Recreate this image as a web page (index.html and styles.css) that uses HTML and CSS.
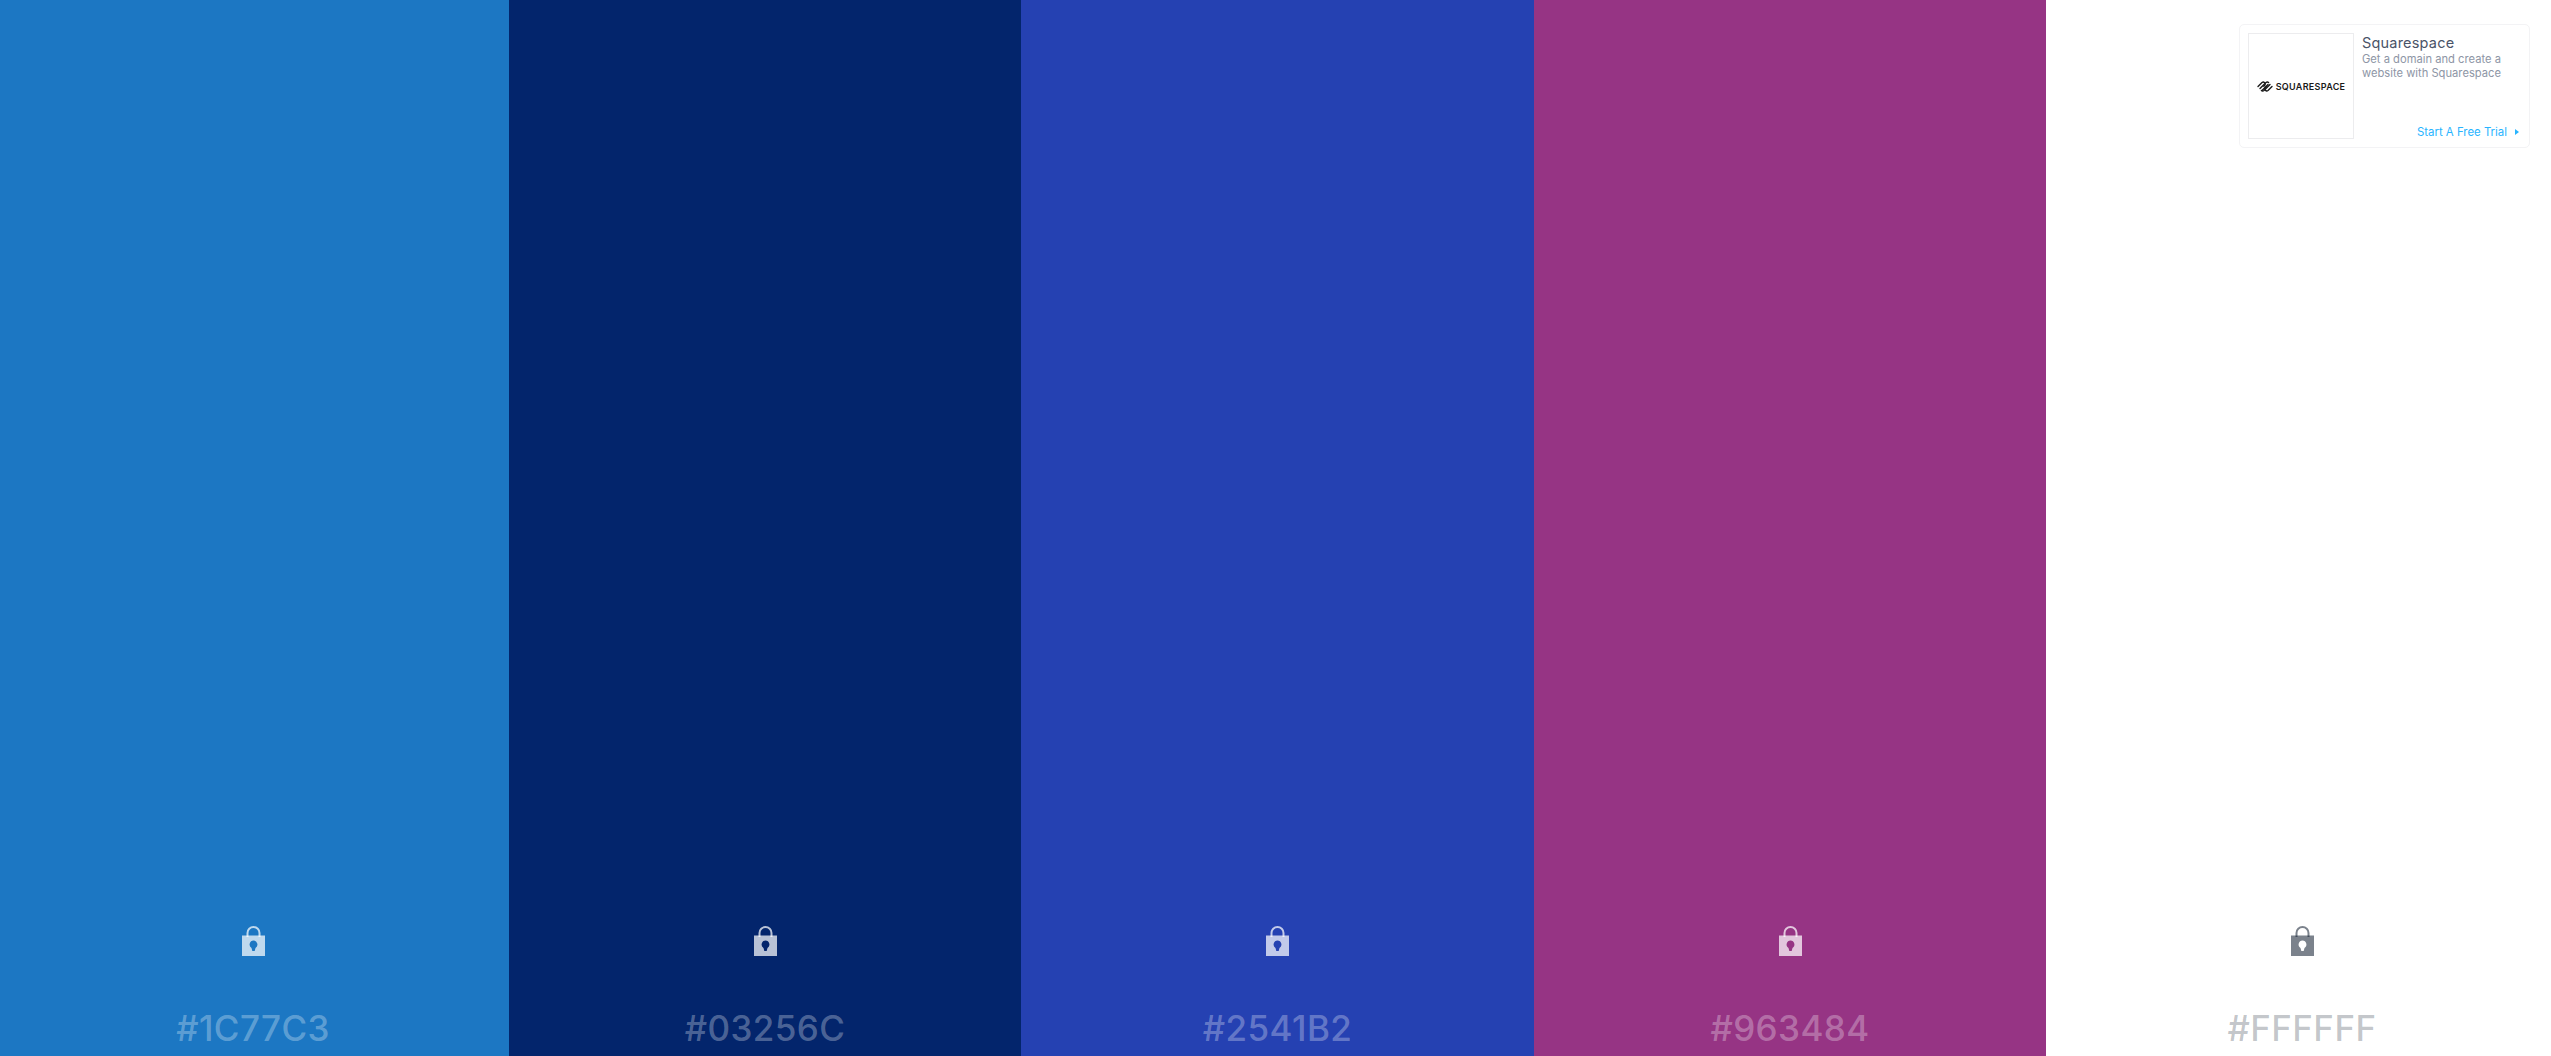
FILE: index.html
```html
<!DOCTYPE html>
<html lang="en">
<head>
<meta charset="utf-8">
<title>Color palette</title>
<link rel="stylesheet" href="styles.css">
</head>
<body>
<svg class="defs" width="0" height="0" aria-hidden="true">
  <symbol id="lock" viewBox="0 0 23 30">
    <path class="shackle" d="M5.5 11V7a6 6 0 0 1 12 0V11"/>
    <path class="lock-body" fill-rule="evenodd" d="M0 9.5h23V30H0zM11.5 14.5a4 4 0 0 0-2 7.4L10.3 25h2.4l.8-3.1a4 4 0 0 0-2-7.4z"/>
  </symbol>
</svg>
<main class="palette">
  <section class="swatch swatch-blue">
    <svg class="lock"><use href="#lock"/></svg>
    <div class="hex">#1C77C3</div>
  </section>
  <section class="swatch swatch-navy">
    <svg class="lock"><use href="#lock"/></svg>
    <div class="hex">#03256C</div>
  </section>
  <section class="swatch swatch-indigo">
    <svg class="lock"><use href="#lock"/></svg>
    <div class="hex">#2541B2</div>
  </section>
  <section class="swatch swatch-plum">
    <svg class="lock"><use href="#lock"/></svg>
    <div class="hex">#963484</div>
  </section>
  <section class="swatch swatch-white">
    <svg class="lock"><use href="#lock"/></svg>
    <div class="hex">#FFFFFF</div>
  </section>
</main>
<aside class="ad">
  <div class="ad-logo">
    <svg class="ad-mark" viewBox="0 0 16 13" aria-hidden="true">
      <g fill="none" stroke="#1a1a1a" stroke-width="1.35" stroke-linecap="round" stroke-linejoin="round">
        <path d="M1 6.5 5 2.5a2 2 0 0 1 2.8 2.8L6.8 6.3"/>
        <path d="M3 8.5 9 2.5a2 2 0 0 1 2.6 0"/>
        <path d="M5 10.5 11 4.5"/>
        <path d="M15 6.5 11 10.5a2 2 0 0 1-2.8-2.8L9.2 6.7"/>
        <path d="M13 4.5 7 10.5a2 2 0 0 1-2.6 0"/>
      </g>
    </svg>
    <span class="ad-wordmark">SQUARESPACE</span>
  </div>
  <div class="ad-body">
    <div class="ad-title">Squarespace</div>
    <div class="ad-copy">Get a domain and create a website with Squarespace</div>
    <div class="ad-cta">Start A Free Trial<span class="ad-arrow"></span></div>
  </div>
</aside>
</body>
</html>
```
FILE: styles.css
```css
* { box-sizing: border-box; }

html, body {
  margin: 0;
  height: 100%;
  overflow: hidden;
  background: #fff;
}

body {
  position: relative;
  font-family: Inter, "Liberation Sans", sans-serif;
}

.defs { display: block; height: 0; }

.palette {
  display: grid;
  grid-template-columns: 512px 512px 513px 512px 512px;
  width: 2561px;
  height: 1056px;
  margin-left: -3px;
}

.swatch {
  display: flex;
  flex-direction: column;
  align-items: center;
  justify-content: flex-end;
  padding-bottom: 8px;
}

.swatch-blue { background: #1c77c3; color: rgba(255, 255, 255, 0.3); --lock: rgba(255, 255, 255, 0.72); }
.swatch-navy { background: #03256c; color: rgba(255, 255, 255, 0.3); --lock: rgba(255, 255, 255, 0.72); }
.swatch-indigo { background: #2541b2; color: rgba(255, 255, 255, 0.3); --lock: rgba(255, 255, 255, 0.72); }
.swatch-plum { background: #963484; color: rgba(255, 255, 255, 0.3); --lock: rgba(255, 255, 255, 0.72); }
.swatch-white { background: #fff; color: rgba(20, 32, 50, 0.27); --lock: rgba(20, 32, 50, 0.56); }

.lock {
  display: block;
  width: 23px;
  height: 30px;
  margin-bottom: 52px;
  color: var(--lock);
}

.lock-body { fill: var(--lock); }
.shackle { fill: none; stroke: var(--lock); stroke-width: 2; }

.hex {
  font-size: 35px;
  line-height: 40px;
  font-weight: 500;
  letter-spacing: 0.4px;
  white-space: nowrap;
}

.ad {
  position: absolute;
  top: 24px;
  right: 21px;
  display: flex;
  gap: 8px;
  width: 291px;
  height: 124px;
  padding: 8px;
  background: #fff;
  border: 1px solid #f3f3f5;
  border-radius: 5px;
}

.ad-logo {
  flex: none;
  display: flex;
  align-items: center;
  justify-content: center;
  gap: 3px;
  width: 106px;
  height: 106px;
  border: 1px solid #ececee;
}

.ad-mark { width: 16px; height: 13px; flex: none; }

.ad-wordmark {
  font-size: 9px;
  font-weight: 600;
  letter-spacing: 0.3px;
  color: #1a1a1a;
}

.ad-body {
  flex: 1;
  display: flex;
  flex-direction: column;
  min-width: 0;
}

.ad-title {
  font-size: 14.5px;
  line-height: 17px;
  letter-spacing: 0.2px;
  color: #4a5468;
  margin-top: 1px;
  margin-bottom: 1px;
}

.ad-copy {
  font-size: 11.2px;
  line-height: 14px;
  color: #8e96a6;
}

.ad-cta {
  display: flex;
  align-items: center;
  justify-content: flex-end;
  margin-top: auto;
  margin-right: 2px;
  font-size: 11.4px;
  line-height: 14px;
  color: #28b4ff;
}

.ad-arrow {
  width: 0;
  height: 0;
  margin-left: 8px;
  border-left: 4px solid #28b4ff;
  border-top: 3px solid transparent;
  border-bottom: 3px solid transparent;
}
```
